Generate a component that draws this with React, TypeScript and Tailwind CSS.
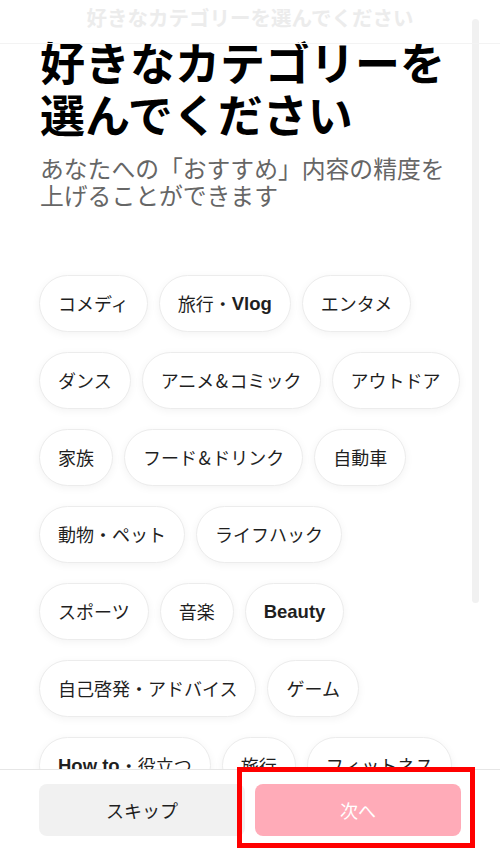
import type { ReactNode } from "react";

type Category = { key: string; label: ReactNode };

const Latin = ({ children }: { children: ReactNode }) => (
  <b className="font-['Liberation_Sans',sans-serif] text-[18.5px] font-bold">{children}</b>
);

const Amp = () => <span className="px-[1.5px]">&amp;</span>;

const CATEGORIES: Category[] = [
  { key: "comedy", label: "コメディ" },
  { key: "travel-vlog", label: <>旅行・<Latin>Vlog</Latin></> },
  { key: "entame", label: "エンタメ" },
  { key: "dance", label: "ダンス" },
  { key: "anime", label: <>アニメ<Amp />コミック</> },
  { key: "outdoor", label: "アウトドア" },
  { key: "family", label: "家族" },
  { key: "food", label: <>フード<Amp />ドリンク</> },
  { key: "car", label: "自動車" },
  { key: "pet", label: "動物・ペット" },
  { key: "lifehack", label: "ライフハック" },
  { key: "sports", label: "スポーツ" },
  { key: "music", label: "音楽" },
  { key: "beauty", label: <Latin>Beauty</Latin> },
  { key: "self", label: "自己啓発・アドバイス" },
  { key: "game", label: "ゲーム" },
  { key: "howto", label: <><Latin>How to</Latin>・役立つ</> },
  { key: "travel", label: "旅行" },
  { key: "fitness", label: "フィットネス" },
];

function Chip({ children }: { children: ReactNode }) {
  return (
    <button
      type="button"
      className="flex h-[57px] items-center rounded-full border border-[#ececec] bg-white px-[18px] text-[18px] text-[#1f1f1f] shadow-[0_2px_8px_rgba(0,0,0,0.05)]"
    >
      {children}
    </button>
  );
}

export default function App() {
  return (
    <div className="relative flex h-[856px] w-[500px] flex-col overflow-hidden bg-white font-['Noto_Sans_CJK_JP',sans-serif]">
      {/* ヘッダー:スクロールで見出しがフェードイン */}
      <header className="absolute inset-x-0 top-0 z-10 flex h-[44px] items-start justify-center border-b border-[#f3f3f3] pt-[3px]">
        <span className="text-[20.5px] font-bold leading-[28px] text-[#ececec]">
          好きなカテゴリーを選んでください
        </span>
      </header>

      <main className="flex-1 overflow-hidden px-[39px] pt-[36px]">
        <h1 className="pl-[1px] text-[45px] font-bold leading-[52px] text-black">
          好きなカテゴリーを
          <br />
          選んでください
        </h1>
        <p className="mt-[14px] pl-[1px] text-[23.8px] leading-[27px] text-[#666666]">
          あなたへの「おすすめ」内容の精度を
          <br />
          上げることができます
        </p>

        <div className="mt-[67px] flex flex-wrap gap-x-[11px] gap-y-[20px]">
          {CATEGORIES.map((c) => (
            <Chip key={c.key}>{c.label}</Chip>
          ))}
        </div>
      </main>

      {/* スクロールバー */}
      <div className="absolute right-[21px] top-[19px] h-[584px] w-[7px] rounded-full bg-[#f1f1f1]" />

      <footer className="relative z-10 flex shrink-0 gap-[10px] border-t border-[#e6e6e6] bg-white px-[39px] pb-[20px] pt-[14px]">
        <button
          type="button"
          className="flex h-[52px] flex-1 items-center justify-center rounded-[8px] bg-[#f1f1f1] text-[18px] text-[#1f1f1f]"
        >
          スキップ
        </button>
        <button
          type="button"
          className="flex h-[52px] flex-1 items-center justify-center rounded-[8px] bg-[#ffabb8] text-[18px] text-white"
        >
          次へ
        </button>
      </footer>

      {/* 注釈の赤枠 */}
      <div className="pointer-events-none absolute left-[237px] top-[767px] z-20 h-[81px] w-[238px] border-[5px] border-[#ff0000]" />
    </div>
  );
}
